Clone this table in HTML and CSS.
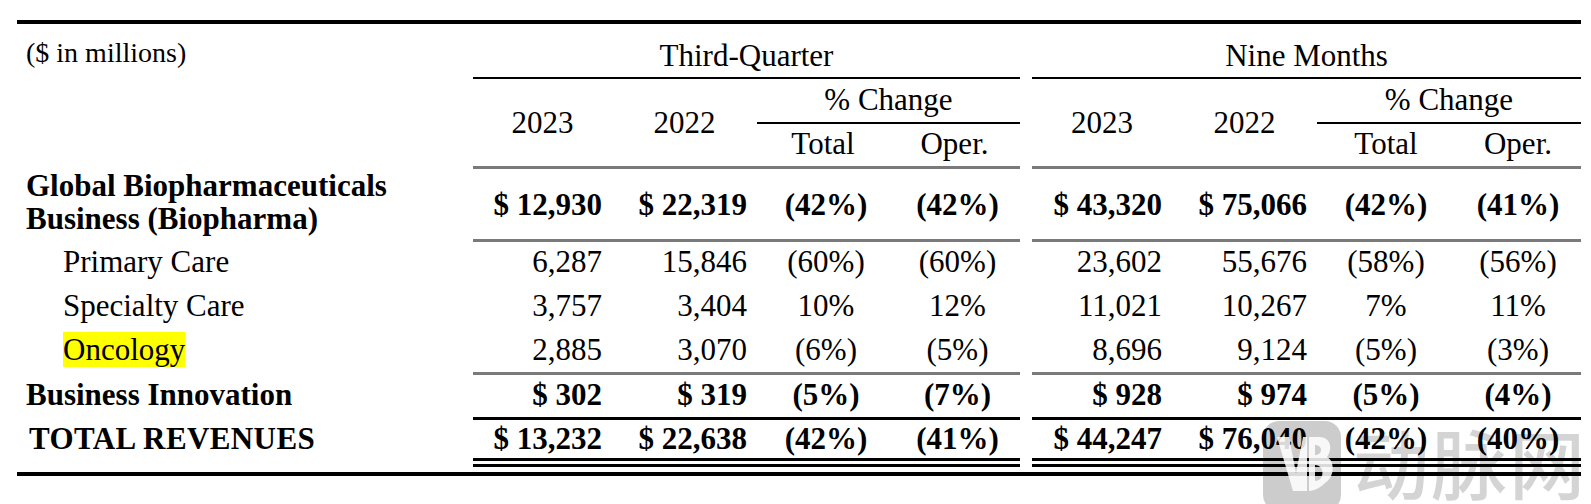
FILE: index.html
```html
<!DOCTYPE html>
<html lang="en">
<head>
<meta charset="utf-8">
<title>Revenues by Business</title>
<link rel="stylesheet" href="styles.css">
</head>
<body>
<div class="report">
  <table class="rev">
    <colgroup>
      <col class="c-label">
      <col class="c-q23"><col class="c-q22"><col class="c-qt"><col class="c-qo">
      <col class="c-gap">
      <col class="c-n23"><col class="c-n22"><col class="c-nt"><col class="c-no">
    </colgroup>
    <thead>
      <tr class="h1">
        <th class="unit" rowspan="3">($ in millions)</th>
        <th class="grp" colspan="4">Third-Quarter</th>
        <th class="gap"></th>
        <th class="grp" colspan="4">Nine Months</th>
      </tr>
      <tr class="h2">
        <th class="yr" rowspan="2">2023</th>
        <th class="yr" rowspan="2">2022</th>
        <th class="chg" colspan="2">% Change</th>
        <th class="gap" rowspan="2"></th>
        <th class="yr" rowspan="2">2023</th>
        <th class="yr" rowspan="2">2022</th>
        <th class="chg" colspan="2">% Change</th>
      </tr>
      <tr class="h3">
        <th class="sub">Total</th>
        <th class="sub">Oper.</th>
        <th class="sub">Total</th>
        <th class="sub">Oper.</th>
      </tr>
    </thead>
    <tbody>
      <tr class="r-global bold">
        <td class="lbl">Global Biopharmaceuticals<br>Business (Biopharma)</td>
        <td class="num">$ 12,930</td><td class="num">$ 22,319</td><td class="pct pq">(42%)</td><td class="pct pq">(42%)</td>
        <td class="gap"></td>
        <td class="num">$ 43,320</td><td class="num">$ 75,066</td><td class="pct">(42%)</td><td class="pct">(41%)</td>
      </tr>
      <tr class="r-sub">
        <td class="lbl ind">Primary Care</td>
        <td class="num">6,287</td><td class="num">15,846</td><td class="pct pq">(60%)</td><td class="pct pq">(60%)</td>
        <td class="gap"></td>
        <td class="num">23,602</td><td class="num">55,676</td><td class="pct">(58%)</td><td class="pct">(56%)</td>
      </tr>
      <tr class="r-sub">
        <td class="lbl ind">Specialty Care</td>
        <td class="num">3,757</td><td class="num">3,404</td><td class="pct pq">10%</td><td class="pct pq">12%</td>
        <td class="gap"></td>
        <td class="num">11,021</td><td class="num">10,267</td><td class="pct">7%</td><td class="pct">11%</td>
      </tr>
      <tr class="r-sub r-last">
        <td class="lbl ind"><span class="hl">Oncology</span></td>
        <td class="num">2,885</td><td class="num">3,070</td><td class="pct pq">(6%)</td><td class="pct pq">(5%)</td>
        <td class="gap"></td>
        <td class="num">8,696</td><td class="num">9,124</td><td class="pct">(5%)</td><td class="pct">(3%)</td>
      </tr>
      <tr class="r-bi bold">
        <td class="lbl">Business Innovation</td>
        <td class="num">$ 302</td><td class="num">$ 319</td><td class="pct pq">(5%)</td><td class="pct pq">(7%)</td>
        <td class="gap"></td>
        <td class="num">$ 928</td><td class="num">$ 974</td><td class="pct">(5%)</td><td class="pct">(4%)</td>
      </tr>
      <tr class="r-tot bold">
        <td class="lbl tot">TOTAL REVENUES</td>
        <td class="num">$ 13,232</td><td class="num">$ 22,638</td><td class="pct pq">(42%)</td><td class="pct pq">(41%)</td>
        <td class="gap"></td>
        <td class="num">$ 44,247</td><td class="num">$ 76,040</td><td class="pct">(42%)</td><td class="pct">(40%)</td>
      </tr>
    </tbody>
  </table>
</div>
<div class="watermark" aria-hidden="true">
  <svg class="wm-logo" width="80" height="90" viewBox="0 0 80 90">
    <rect x="0" y="0" width="78" height="90" rx="16" fill="rgba(0,0,0,0.2)"/>
    <path d="M14 16 L26 16 L33 52 L40 16 L44 16 L44 70 L30 70 Z" fill="#fff" fill-opacity="0.85"/>
    <path d="M46 16 L56 16 C68 16 70 28 64 36 C72 40 72 56 62 62 C58 66 52 70 46 70 Z M52 24 L52 34 C60 34 60 24 52 24 Z M52 44 L52 60 C62 60 62 44 52 44 Z" fill="#fff" fill-opacity="0.85" fill-rule="evenodd"/>
  </svg>
  <span class="wm-text">动脉网</span>
</div>
</body>
</html>
```

FILE: styles.css
```css
html, body {
  margin: 0;
  padding: 0;
  background: #fff;
}

body {
  font-family: "Liberation Serif", "Times New Roman", serif;
  color: #000;
  width: 1591px;
  height: 504px;
  overflow: hidden;
  position: relative;
}

.report {
  margin: 20px 0 0 17px;
  width: 1564px;
  border-top: 4px solid #000;
  border-bottom: 4px solid #000;
  padding-bottom: 5px;
}

.rev {
  width: 1564px;
  table-layout: fixed;
  border-collapse: separate;
  border-spacing: 0;
  font-size: 31px;
  line-height: 33px;
}

.c-label { width: 456px; }
.c-q23 { width: 139px; }
.c-q22 { width: 145px; }
.c-qt { width: 132px; }
.c-qo { width: 131px; }
.c-gap { width: 12px; }
.c-n23 { width: 140px; }
.c-n22 { width: 145px; }
.c-nt { width: 138px; }
.c-no { width: 126px; }

.rev th,
.rev td {
  padding: 0;
  white-space: nowrap;
  font-weight: normal;
}

.rev th {
  text-align: center;
  font-size: 31px;
}

.h1 { height: 55px; }
.h2 { height: 45px; }
.h3 { height: 45px; }

.rev th.unit {
  text-align: left;
  vertical-align: top;
  padding: 12px 0 0 9px;
  font-size: 28px;
}

.rev th.grp {
  vertical-align: bottom;
  padding-bottom: 5px;
  border-bottom: 2px solid #000;
}

.rev th.chg {
  vertical-align: bottom;
  padding-bottom: 6px;
  border-bottom: 2px solid #000;
}

.rev th.sub {
  vertical-align: bottom;
  padding-bottom: 6px;
  border-bottom: 3px solid #7a7a7a;
}

.rev th.yr {
  vertical-align: middle;
  border-bottom: 3px solid #7a7a7a;
}

.rev .gap {
  border: none;
}

.bold td { font-weight: bold; }

.rev td.lbl {
  text-align: left;
  padding-left: 9px;
}

.rev td.ind { padding-left: 46px; }
.rev td.tot { padding-left: 12px; letter-spacing: 0.4px; }

.rev td.num {
  text-align: right;
  padding-right: 10px;
}

.pct { text-align: center; }
.rev td.pq { padding-left: 6px; }

.r-global { height: 73px; }
.r-global td { vertical-align: middle; border-bottom: 3px solid #7a7a7a; }
.r-global td.lbl { vertical-align: top; }

.r-sub { height: 44px; }
.r-sub td { vertical-align: top; padding-top: 3px; }
.r-last { height: 45px; }
.r-last td { border-bottom: 3px solid #7a7a7a; }

.r-bi { height: 45px; }
.r-bi td { vertical-align: top; padding-top: 3px; border-bottom: 3px solid #000; }

.r-tot { height: 47px; }
.r-tot td { vertical-align: top; padding-top: 2px; border-bottom: 9px double #000; }

.rev td.lbl,
.rev td.gap { border-bottom: none; }

.hl { background: #ffff00; }

.watermark {
  position: absolute;
  left: 1263px;
  top: 421px;
  display: flex;
  align-items: flex-start;
  gap: 10px;
  pointer-events: none;
}

.wm-logo { display: block; }

.wm-text {
  font-family: "Noto Sans CJK SC", sans-serif;
  font-weight: 500;
  font-size: 76px;
  line-height: 80px;
  color: rgba(0, 0, 0, 0.17);
  letter-spacing: 2px;
}
```
